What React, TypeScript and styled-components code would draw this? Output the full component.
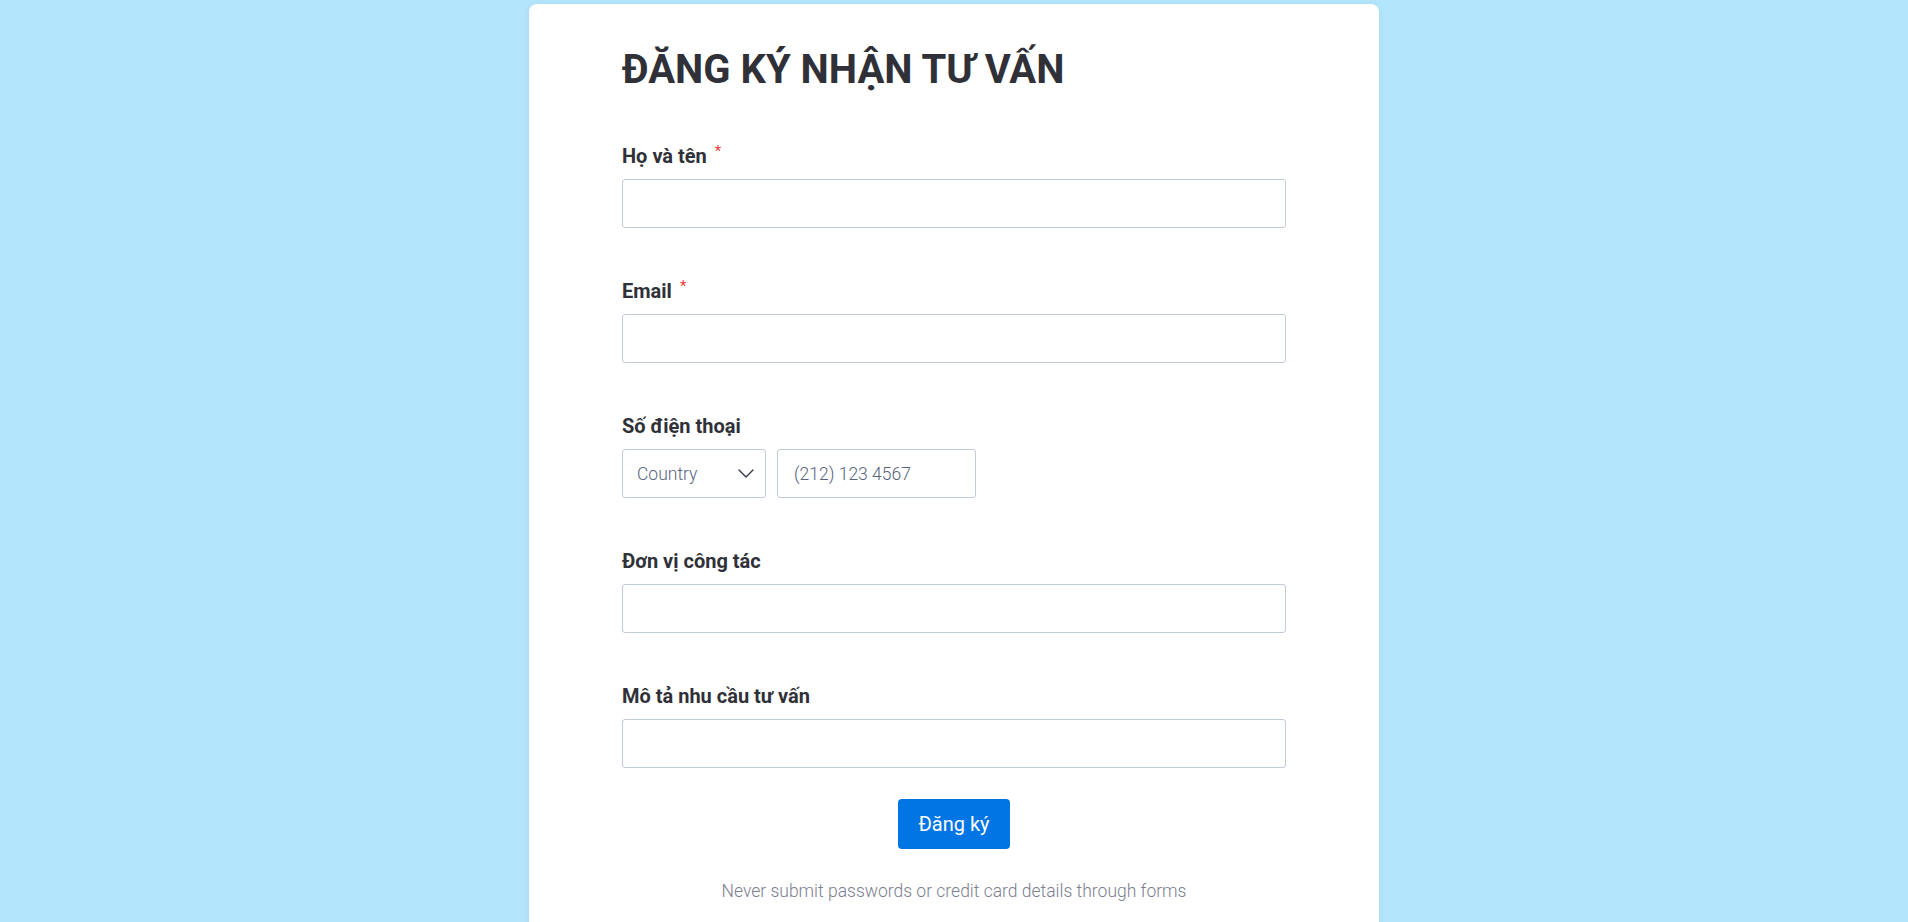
import styled, { createGlobalStyle } from 'styled-components'

const GlobalStyle = createGlobalStyle`
  html, body {
    margin: 0;
    padding: 0;
    background: #b3e5fc;
    font-family: Roboto, "Liberation Sans", Arial, sans-serif;
  }
  * {
    box-sizing: border-box;
  }
`

const Page = styled.div`
  display: flex;
  justify-content: center;
  padding-top: 4px;
  min-height: 100vh;
`

const Card = styled.div`
  width: 850px;
  min-height: 940px;
  background: #ffffff;
  border-radius: 8px;
  padding: 42px 93px 0;
  box-shadow: 0 2px 6px rgba(87, 114, 129, 0.12);
`

const Title = styled.h1`
  margin: 0;
  font-size: 40px;
  line-height: 48px;
  font-weight: 700;
  color: #303138;
`

const Fields = styled.div`
  margin-top: 50px;
  display: flex;
  flex-direction: column;
  gap: 51px;
`

const Field = styled.div`
  display: flex;
  flex-direction: column;
`

const Label = styled.label`
  font-size: 20px;
  line-height: 24px;
  font-weight: 700;
  color: #303138;
  margin-bottom: 11px;
`

const Required = styled.span`
  color: #f23a3c;
  font-size: 15px;
  font-weight: 400;
  line-height: 15px;
  vertical-align: top;
  margin-left: 8px;
`

const Input = styled.input<{ $width?: number }>`
  width: ${(p) => (p.$width ? `${p.$width}px` : '100%')};
  height: 49px;
  border: 1px solid #c3cad8;
  border-radius: 3px;
  padding: 0 16px;
  font-family: inherit;
  font-size: 17.5px;
  color: #2c3345;
  background: #ffffff;
  outline: none;

  &::placeholder {
    color: #57647e;
    font-weight: 300;
  }
`

const PhoneRow = styled.div`
  display: flex;
  gap: 11px;
`

const CountrySelect = styled.div`
  width: 144px;
  height: 49px;
  border: 1px solid #c3cad8;
  border-radius: 3px;
  padding: 0 11px 0 14px;
  display: flex;
  align-items: center;
  justify-content: space-between;
  font-size: 17.5px;
  font-weight: 300;
  color: #57647e;
`

const Chevron = styled.svg`
  width: 16px;
  height: 9px;
`

const Submit = styled.button`
  display: block;
  margin: 31px auto 0;
  height: 50px;
  padding: 0 20px;
  border: none;
  border-radius: 4px;
  background: #0075e3;
  color: #ffffff;
  font-family: inherit;
  font-size: 20px;
  font-weight: 400;
  cursor: pointer;
`

const Notice = styled.p`
  margin: 31px 0 0;
  text-align: center;
  font-size: 17.5px;
  line-height: 22px;
  font-weight: 300;
  color: #7b7e8f;
`

const fields = [
  { label: 'Họ và tên', required: true },
  { label: 'Email', required: true },
  { label: 'Số điện thoại', phone: true },
  { label: 'Đơn vị công tác' },
  { label: 'Mô tả nhu cầu tư vấn' },
]

export default function App() {
  return (
    <>
      <GlobalStyle />
      <Page>
        <Card>
          <Title>ĐĂNG KÝ NHẬN TƯ VẤN</Title>
          <Fields>
            {fields.map((f) => (
              <Field key={f.label}>
                <Label>
                  {f.label}
                  {f.required && <Required>*</Required>}
                </Label>
                {f.phone ? (
                  <PhoneRow>
                    <CountrySelect>
                      Country
                      <Chevron viewBox="0 0 16 9" fill="none">
                        <path
                          d="M1 1l7 7 7-7"
                          stroke="#2c3345"
                          strokeWidth="1.3"
                          strokeLinecap="round"
                          strokeLinejoin="round"
                        />
                      </Chevron>
                    </CountrySelect>
                    <Input $width={199} placeholder="(212) 123 4567" />
                  </PhoneRow>
                ) : (
                  <Input />
                )}
              </Field>
            ))}
          </Fields>
          <Submit>Đăng ký</Submit>
          <Notice>Never submit passwords or credit card details through forms</Notice>
        </Card>
      </Page>
    </>
  )
}
